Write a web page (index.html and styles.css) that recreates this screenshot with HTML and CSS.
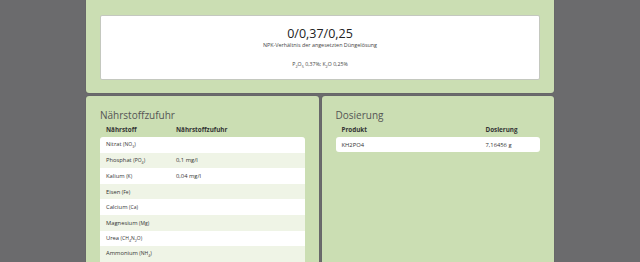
FILE: index.html
```html
<!DOCTYPE html>
<html lang="de">
<head>
  <meta charset="UTF-8" />
  <title>Dünger-Rechner</title>
  <link rel="stylesheet" href="styles.css">
</head>
<body>
  <div class="page">
    <section class="panel summary">
      <div class="resultBox">
        <div class="npk">0/0,37/0,25</div>
        <div class="npkLabel">NPK-Verhältnis der angesetzten Düngelösung</div>
        <div class="npkDetail">P<sub>2</sub>O<sub>5</sub> 0,37%; K<sub>2</sub>O 0,25%</div>
      </div>
    </section>

    <div class="columns">
      <section class="panel">
        <h2>Nährstoffzufuhr</h2>
        <table class="dataTable nutrients">
          <thead>
            <tr><th>Nährstoff</th><th>Nährstoffzufuhr</th></tr>
          </thead>
          <tbody>
            <tr><td>Nitrat <small>(NO<sub>3</sub>)</small></td><td></td></tr>
            <tr><td>Phosphat <small>(PO<sub>4</sub>)</small></td><td>0,1 mg/l</td></tr>
            <tr><td>Kalium <small>(K)</small></td><td>0,04 mg/l</td></tr>
            <tr><td>Eisen <small>(Fe)</small></td><td></td></tr>
            <tr><td>Calcium <small>(Ca)</small></td><td></td></tr>
            <tr><td>Magnesium <small>(Mg)</small></td><td></td></tr>
            <tr><td>Urea <small>(CH<sub>4</sub>N<sub>2</sub>O)</small></td><td></td></tr>
            <tr><td>Ammonium <small>(NH<sub>4</sub>)</small></td><td></td></tr>
          </tbody>
        </table>
      </section>

      <section class="panel">
        <h2>Dosierung</h2>
        <table class="dataTable dosage">
          <thead>
            <tr><th>Produkt</th><th>Dosierung</th></tr>
          </thead>
          <tbody>
            <tr><td>KH2PO4</td><td>7,16456 g</td></tr>
          </tbody>
        </table>
      </section>
    </div>
  </div>
</body>
</html>
```

FILE: styles.css
```css
/* page frame */
body {
  margin: 0;
  background: #6b6b6d;
  font-family: "Open Sans", Arial, sans-serif;
  color: #333;
  height: 262px;
  overflow: hidden;
}
.page {
  width: 468px;
  margin: 0 auto;
  display: flex;
  flex-direction: column;
  gap: 3px;
}
.panel {
  background: #cbdeb3;
  border-radius: 3px;
  box-shadow: 0 0 1px #48484a;
  padding: 12px 14px;
}
.summary {
  padding: 15px 14px 13px;
  border-top-left-radius: 0;
  border-top-right-radius: 0;
}
.resultBox {
  background: #fff;
  border: 1px solid #c4c8bf;
  border-radius: 2px;
  height: 63px;
  text-align: center;
  color: #222;
}
.npk {
  font-size: 12.5px;
  line-height: 14px;
  margin-top: 11px;
}
.npkLabel {
  font-size: 5.4px;
  line-height: 8px;
  color: #444;
}
.npkDetail {
  font-size: 5.2px;
  line-height: 8px;
  margin-top: 11px;
  color: #444;
}
.npkDetail sub {
  font-size: 3.8px;
}

.columns {
  display: grid;
  grid-template-columns: 1fr 1fr;
  gap: 3px;
}
.columns .panel {
  height: 142px;
  overflow: hidden;
  border-bottom-left-radius: 0;
  border-bottom-right-radius: 0;
}
h2 {
  margin: 0;
  font-size: 10px;
  font-weight: normal;
  line-height: 14px;
  color: #555;
}

/* tables */
.dataTable {
  width: 100%;
  border-collapse: collapse;
}
.dataTable th {
  text-align: left;
  font-size: 6.3px;
  font-weight: bold;
  color: #333;
  height: 15px;
  padding: 0 6px;
}
.dataTable td {
  font-size: 5.8px;
  height: 15.6px;
  padding: 0 6px;
  background: #fff;
}
.dataTable tbody tr:nth-child(even) td {
  background: #eff4e6;
}
.dataTable tbody tr:first-child td:first-child { border-top-left-radius: 3px; }
.dataTable tbody tr:first-child td:last-child { border-top-right-radius: 3px; }
.dosage tbody tr:last-child td:first-child { border-bottom-left-radius: 3px; }
.dosage tbody tr:last-child td:last-child { border-bottom-right-radius: 3px; }

.nutrients th:first-child,
.nutrients td:first-child {
  width: 58px;
}
.dosage th:first-child,
.dosage td:first-child {
  width: 132px;
}
.dosage td {
  height: 15px;
}
small {
  font-size: 5px;
}
small sub {
  font-size: 3.6px;
}
```
